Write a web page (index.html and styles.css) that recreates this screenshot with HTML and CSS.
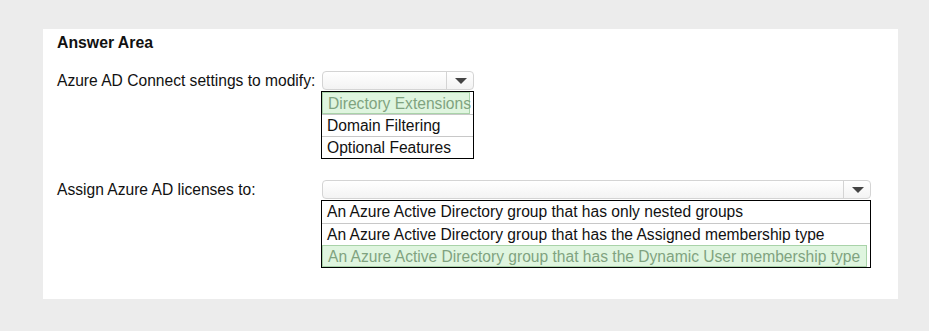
FILE: index.html
```html
<!DOCTYPE html>
<html lang="en">
<head>
  <meta charset="UTF-8" />
  <title>Answer Area</title>
  <link rel="stylesheet" href="styles.css">
</head>
<body>

  <div class="panel">
    <h2 class="title">Answer Area</h2>

    <div class="question">
      <div class="label">Azure AD Connect settings to modify:</div>
      <div class="answer short">
        <div class="select"><span class="arrow"></span></div>
        <ul class="options">
          <li class="picked">Directory Extensions</li>
          <li>Domain Filtering</li>
          <li>Optional Features</li>
        </ul>
      </div>
    </div>

    <div class="question">
      <div class="label">Assign Azure AD licenses to:</div>
      <div class="answer long">
        <div class="select"><span class="arrow"></span></div>
        <ul class="options">
          <li>An Azure Active Directory group that has only nested groups</li>
          <li>An Azure Active Directory group that has the Assigned membership type</li>
          <li class="picked">An Azure Active Directory group that has the Dynamic User membership type</li>
        </ul>
      </div>
    </div>
  </div>

</body>
</html>
```

FILE: styles.css
```css
* { box-sizing: border-box; margin: 0; padding: 0; font-family: "Liberation Sans", Arial, sans-serif; }

body {
  background: #ececec;
  padding: 29px 31px 33px 43px;
  width: 929px;
  height: 331px;
}

.panel {
  background: #ffffff;
  width: 855px;
  height: 270px;
  padding: 4px 0 0 14px;
}

.title {
  font-size: 15.8px;
  font-weight: bold;
  line-height: 20px;
  color: #111;
  margin-bottom: 18px;
}

.question {
  display: flex;
  margin-bottom: 21px;
}

.label {
  width: 264px;
  font-size: 15.6px;
  line-height: 19px;
  color: #111;
  white-space: nowrap;
}

.answer.short { width: 153px; }
.answer.long { width: 550px; }

.select {
  height: 19px;
  margin-bottom: 1px;
  margin-left: 1px;
  border: 1px solid #d4d4d4;
  border-radius: 4px;
  background: linear-gradient(#ffffff, #f3f3f3);
  position: relative;
}

.arrow {
  position: absolute;
  right: 0;
  top: 0;
  width: 27px;
  height: 17px;
  border-left: 1px solid #d4d4d4;
}

.arrow::after {
  content: "";
  position: absolute;
  left: 8px;
  top: 6px;
  border-left: 6px solid transparent;
  border-right: 6px solid transparent;
  border-top: 6px solid #444;
}

.options {
  list-style: none;
  border: 1px solid #000;
}

.options li {
  height: 22px;
  line-height: 21px;
  font-size: 15.6px;
  padding-left: 5px;
  color: #111;
  border-top: 1px solid #c8c8c8;
  white-space: nowrap;
}

.options li:first-child { border-top: none; }

.options li.picked {
  color: #7fa37f;
  background: #dff5df;
  border: 1px solid #a9d3a9;
  margin-right: 3px;
}
```
